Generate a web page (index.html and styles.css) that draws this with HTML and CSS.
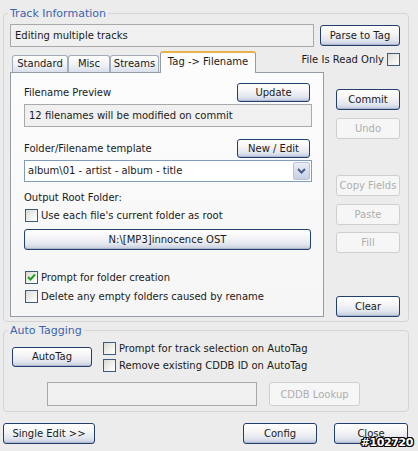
FILE: index.html
```html
<!DOCTYPE html>
<html lang="en">
<head>
    <meta charset="UTF-8">
    <title>Track Information</title>
    <link rel="stylesheet" href="styles.css">
</head>
<body>
    <div class="window">
        <fieldset class="group track">
            <legend>Track Information</legend>
            <div class="top-row">
                <div class="field info">Editing multiple tracks</div>
                <button class="btn parse">Parse to Tag</button>
            </div>

            <div class="tab-row">
                <div class="tabs">
                    <span class="tab tab-standard">Standard</span>
                    <span class="tab tab-misc">Misc</span>
                    <span class="tab tab-streams">Streams</span>
                    <span class="tab active">Tag -&gt; Filename</span>
                </div>
                <label class="check readonly">File Is Read Only <span class="box"></span></label>
            </div>

            <div class="main">
                <div class="panel">
                    <div class="line">
                        <span>Filename Preview</span>
                        <button class="btn small">Update</button>
                    </div>
                    <div class="field preview">12 filenames will be modified on commit</div>

                    <div class="line template">
                        <span>Folder/Filename template</span>
                        <button class="btn small">New / Edit</button>
                    </div>
                    <div class="combo">
                        <span class="combo-text">album\01 - artist - album - title</span>
                        <span class="combo-arrow">
                            <svg width="9" height="6" viewBox="0 0 9 6"><path d="M1 1 L4.5 4.5 L8 1" fill="none" stroke="#4a5d80" stroke-width="2"/></svg>
                        </span>
                    </div>

                    <div class="caption">Output Root Folder:</div>
                    <label class="check opt first"><span class="box"></span>Use each file's current folder as root</label>
                    <button class="btn folder">N:\[MP3]innocence OST</button>

                    <label class="check opt prompt"><span class="box checked">
                        <svg width="11" height="11" viewBox="0 0 11 11"><path d="M2 5 L4.5 7.5 L9 2.5" fill="none" stroke="#21a121" stroke-width="2"/></svg>
                    </span>Prompt for folder creation</label>
                    <label class="check opt"><span class="box"></span>Delete any empty folders caused by rename</label>
                </div>

                <div class="side">
                    <button class="btn side-btn commit">Commit</button>
                    <button class="btn side-btn undo" disabled>Undo</button>
                    <button class="btn side-btn copy" disabled>Copy Fields</button>
                    <button class="btn side-btn paste" disabled>Paste</button>
                    <button class="btn side-btn fill" disabled>Fill</button>
                    <button class="btn side-btn clear">Clear</button>
                </div>
            </div>
        </fieldset>

        <fieldset class="group auto">
            <legend>Auto Tagging</legend>
            <div class="auto-row">
                <button class="btn autotag">AutoTag</button>
                <div class="auto-checks">
                    <label class="check"><span class="box"></span>Prompt for track selection on AutoTag</label>
                    <label class="check"><span class="box"></span>Remove existing CDDB ID on AutoTag</label>
                </div>
            </div>
            <div class="lookup-row">
                <div class="field cddb"></div>
                <button class="btn lookup" disabled>CDDB Lookup</button>
            </div>
        </fieldset>

        <div class="footer">
            <button class="btn single">Single Edit &gt;&gt;</button>
            <button class="btn config">Config</button>
            <button class="btn close">Close</button>
        </div>

        <span class="stamp">#102720</span>
    </div>
</body>
</html>
```

FILE: styles.css
```css
* {
    box-sizing: border-box;
}
body {
    margin: 0;
    font-family: "DejaVu Sans", "Liberation Sans", sans-serif;
    font-size: 10px;
    color: #1a1a1a;
    background-color: #ececec;
}
.window {
    position: relative;
    width: 418px;
    height: 451px;
    overflow: hidden;
    background-color: #ececec;
}

/* group boxes */
.group {
    margin: 0 0 0 3px;
    width: 406px;
    min-inline-size: 0;
    border: 1px solid #d4d4d4;
    border-radius: 4px;
}
.group legend {
    margin-left: -2px;
    padding: 0 2px;
    line-height: 13px;
    font-size: 11px;
    color: #3c64ae;
}
.track {
    margin-top: 7px;
    padding: 4px 8px 4px 6px;
}
.auto {
    margin-top: 2px;
    padding: 4px 8px 5px 6px;
}

/* buttons */
.btn {
    font-family: inherit;
    font-size: 10px;
    color: #1a1a1a;
    height: 21px;
    padding: 0;
    border: 1px solid #223f6e;
    border-radius: 3px;
    background: linear-gradient(to bottom, #ffffff 0%, #f5f5f7 40%, #e2e6ee 75%, #c4cbdc 100%);
    box-shadow: inset 0 -1px 0 #aeb8cf;
}
.btn:disabled {
    color: #aeaeae;
    border-color: #cfcfcf;
    background: #f6f6f6;
    box-shadow: none;
}

/* inputs */
.field {
    height: 23px;
    border: 1px solid #a9a9a9;
    background-color: #f0f0f0;
    padding: 0 4px;
    line-height: 21px;
}
.check {
    display: flex;
    align-items: center;
    height: 14px;
    white-space: nowrap;
}
.box {
    display: inline-flex;
    align-items: center;
    justify-content: center;
    width: 13px;
    height: 13px;
    border: 1px solid #3e5a7e;
    background: linear-gradient(135deg, #dadad6 0%, #f2f2f0 60%, #ffffff 100%);
}

/* track information */
.top-row {
    display: flex;
    justify-content: space-between;
    align-items: center;
}
.info {
    width: 304px;
}
.parse {
    width: 80px;
}

.tab-row {
    display: flex;
    align-items: flex-start;
    margin-top: 4px;
    height: 21px;
}
.tabs {
    display: flex;
    align-items: flex-end;
    height: 21px;
    padding-left: 2px;
}
.tab {
    height: 17px;
    line-height: 16px;
    text-align: center;
    border: 1px solid #a4acb8;
    border-bottom: none;
    border-radius: 3px 3px 0 0;
    background: linear-gradient(to bottom, #ffffff 0%, #f1f3f7 50%, #d9e0ec 100%);
}
.tab-standard {
    width: 56px;
}
.tab-misc {
    width: 42px;
}
.tab-streams {
    width: 49px;
}
.tab.active {
    position: relative;
    z-index: 1;
    width: 96px;
    height: 22px;
    margin-left: 1px;
    margin-bottom: -1px;
    line-height: 18px;
    border-color: #949ca6;
    border-top: 2px solid #eab14a;
    background: #fcfcfc;
}
.readonly {
    margin-left: auto;
    margin-top: 1px;
}
.readonly .box {
    margin-left: 3px;
}

.main {
    display: flex;
}
.panel {
    width: 314px;
    height: 245px;
    padding: 10px 11px 0 13px;
    border: 1px solid #949ca6;
    background: linear-gradient(to bottom, #fcfcfc 0%, #f6f6f6 100%);
}
.line {
    display: flex;
    justify-content: space-between;
    align-items: center;
    height: 19px;
}
.line .btn.small {
    width: 73px;
    height: 19px;
    margin-right: 2px;
}
.preview {
    margin-top: 2px;
}
.template {
    margin-top: 12px;
}
.combo {
    display: flex;
    margin-top: 2px;
    height: 22px;
    border: 1px solid #7f9db9;
    background: #fff;
}
.combo-text {
    flex: 1;
    padding-left: 3px;
    line-height: 20px;
}
.combo-arrow {
    display: flex;
    align-items: center;
    justify-content: center;
    width: 17px;
    margin: 1px;
    border: 1px solid #b7c3d8;
    border-radius: 2px;
    background: linear-gradient(to bottom, #e8edf6 0%, #c6d1e5 100%);
}
.caption {
    margin-top: 9px;
    line-height: 13px;
}
.opt .box {
    margin: 0 3px 0 1px;
}
.opt.first {
    margin-top: 4px;
}
.folder {
    display: block;
    width: 287px;
    margin-top: 7px;
}
.prompt {
    margin-top: 20px;
}
.prompt + .opt {
    margin-top: 5px;
}

.side {
    display: flex;
    flex-direction: column;
    width: 64px;
    margin-left: auto;
    padding-top: 17px;
}
.side-btn {
    width: 64px;
}
.undo,
.paste {
    margin-top: 8px;
}
.copy {
    margin-top: 36px;
}
.fill {
    margin-top: 7px;
}
.clear {
    margin-top: auto;
}

/* auto tagging */
.auto-row {
    display: flex;
    align-items: center;
}
.autotag {
    width: 80px;
    height: 20px;
    margin-left: 2px;
}
.auto-checks {
    display: flex;
    flex-direction: column;
    gap: 3px;
    margin-left: 11px;
}
.auto-checks .box {
    margin-right: 3px;
}
.lookup-row {
    display: flex;
    margin-top: 10px;
}
.cddb {
    width: 210px;
    height: 24px;
    margin-left: 37px;
}
.lookup {
    width: 91px;
    height: 24px;
    margin-left: 12px;
}

/* footer */
.footer {
    display: flex;
    margin-top: 11px;
    padding: 0 10px 0 3px;
}
.single {
    width: 92px;
}
.config {
    width: 74px;
    margin-left: auto;
}
.close {
    width: 74px;
    margin-left: 17px;
}
.stamp {
    position: absolute;
    right: 5px;
    bottom: 2px;
    font-size: 11px;
    line-height: 12px;
    letter-spacing: -0.4px;
    font-weight: bold;
    color: #fff;
    text-shadow: 1px 0 0 #000, -1px 0 0 #000, 0 1px 0 #000, 0 -1px 0 #000,
        1px 1px 0 #000, -1px -1px 0 #000, 1px -1px 0 #000, -1px 1px 0 #000;
}
```
